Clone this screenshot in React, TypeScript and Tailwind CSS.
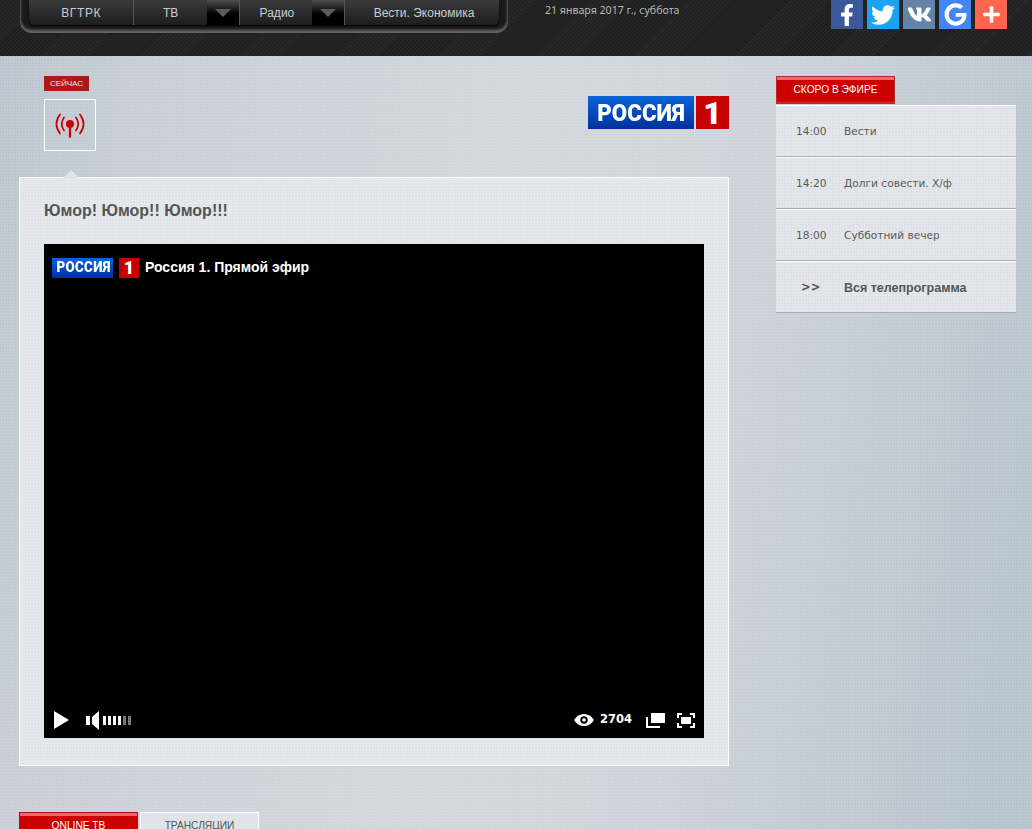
import { FaFacebookF, FaTwitter, FaVk, FaGoogle, FaPlus } from "react-icons/fa";

function Caret() {
  return (
    <div className="relative w-8 h-full flex items-center justify-center bg-black">
      <div className="absolute inset-x-0 top-0 h-[14px] bg-[radial-gradient(#555_0.7px,transparent_0.8px)] bg-[length:2px_2px] [mask-image:linear-gradient(#000,transparent)]" />
      <div className="relative mt-[1px] w-0 h-0 border-l-[8px] border-r-[8px] border-t-[8px] border-l-transparent border-r-transparent border-t-[#5c5c5c]" />
    </div>
  );
}

function NavItem({ label, width }: { label: string; width: string }) {
  return (
    <div className={`${width} h-full flex items-center justify-center border-l border-[#555] first:border-l-0 text-[12px] text-[#c8cdd2] bg-[linear-gradient(#3b3b3b,#1d1d1d)]`}>
      {label}
    </div>
  );
}

function Logo({ small }: { small?: boolean }) {
  return small ? (
    <div className="flex h-5 gap-[6px] font-['Roboto','Noto_Sans',sans-serif] font-black text-white">
      <div className="w-[61px] flex items-center justify-center text-[14px] tracking-[0.4px] bg-[linear-gradient(#0a64d8,#0030a0)]">
        <span className="inline-block pl-[2px] scale-x-[0.95]">РОССИЯ</span>
      </div>
      <div className="w-5 flex items-center justify-center text-[18px] bg-[#c40000]">1</div>
    </div>
  ) : (
    <div className="flex h-[33px] gap-[2px] font-['Roboto','Noto_Sans',sans-serif] font-black text-white">
      <div className="w-[106px] flex items-center justify-center text-[24px] bg-[linear-gradient(#0a64d8,#0030a0)]">
        <span className="inline-block scale-x-[0.93]">РОССИЯ</span>
      </div>
      <div className="w-[33px] flex items-center justify-center text-[32px] bg-[#c40000]">1</div>
    </div>
  );
}

const schedule = [
  ["14:00", "Вести"],
  ["14:20", "Долги совести. Х/ф"],
  ["18:00", "Субботний вечер"],
];

export default function App() {
  return (
    <div className="w-[1032px] h-[829px] overflow-hidden font-['Liberation_Sans',sans-serif] [background-image:radial-gradient(rgba(255,255,255,0.1)_1px,transparent_1.2px),linear-gradient(100deg,#b9c3cc,#c8ced6_15%,#d1d6dc_45%,#cfd4db_62%,#b7c2cb_95%)] [background-size:3px_3px,100%_100%]">
      <header className="h-14 flex items-start bg-[#232323] bg-[repeating-linear-gradient(135deg,#2a2a2a_0,#2a2a2a_1px,#1f1f1f_1px,#1f1f1f_2.8px)]">
        <div className="ml-5 w-[488px] h-[33px] px-[9px] rounded-b-xl bg-[#1a1a1a] shadow-[inset_0_-3px_3px_#666,inset_3px_0_3px_-2px_#444,inset_-3px_0_3px_-2px_#444]">
          <div className="h-[25px] flex rounded-b-md overflow-hidden shadow-[0_1px_2px_#000]">
            <NavItem label="ВГТРК" width="w-[105px] tracking-[0.6px]" />
            <NavItem label="ТВ" width="w-[74px]" />
            <Caret />
            <NavItem label="Радио" width="w-[74px] pl-[2px]" />
            <Caret />
            <NavItem label="Вести. Экономика" width="w-[156px] pl-1" />
          </div>
        </div>
        <div className="ml-[37px] mt-[4px] w-[286px] text-[10.600px] leading-[13px] text-[#b8b8b0] font-['Noto_Sans',sans-serif]">
          21 января 2017 г., суббота
        </div>
        <div className="flex gap-1 text-white">
          <div className="w-8 h-[29px] flex items-center justify-center bg-[#3b5998] text-[22px]"><FaFacebookF /></div>
          <div className="w-8 h-[29px] flex items-center justify-center bg-[#1da1f2] text-[24px]"><FaTwitter /></div>
          <div className="w-8 h-[29px] flex items-center justify-center bg-[#6383a8] text-[25px]"><FaVk /></div>
          <div className="w-8 h-[29px] flex items-center justify-center bg-[#4285f4] text-[23px]"><FaGoogle /></div>
          <div className="w-8 h-[29px] flex items-center justify-center bg-[#ff6550] text-[19px]"><FaPlus /></div>
        </div>
      </header>

      <main className="flex pl-[19px] pt-5 gap-[47px]">
        <div className="w-[710px]">
          <div className="h-[101px] flex justify-between pl-[25px]">
            <div>
              <div className="w-[45px] h-[15px] flex items-center justify-center bg-[#ac1a17] text-[#f4e4e4] text-[8px]">СЕЙЧАС</div>
              <div className="mt-2 w-[52px] h-[52px] border border-white flex items-center justify-center">
                <svg width="32" height="32" viewBox="0 0 32 32" fill="none" stroke="#cc0000" strokeWidth="1.700" strokeLinecap="round">
                  <circle cx="16" cy="15" r="4" fill="#cc0000" stroke="none" />
                  <path d="M16 16v12.600" strokeWidth="2.200" strokeLinecap="butt" />
                  <path d="M6 5.500c-4.500 6-4.500 13 0 19" />
                  <path d="M10 8.500c-2.800 4-2.800 9 0 13" />
                  <path d="M26 5.500c4.500 6 4.500 13 0 19" />
                  <path d="M22 8.500c2.800 4 2.800 9 0 13" />
                </svg>
              </div>
            </div>
            <div className="mt-5">
              <Logo />
            </div>
          </div>

          <section className="relative h-[589px] border border-white bg-[#e0e4e8] [background-image:radial-gradient(rgba(255,255,255,0.2)_1px,transparent_1.2px)] [background-size:3px_3px] px-6 pt-[23px]">
            <div className="absolute left-[43px] -top-[8px] w-0 h-0 border-l-[8px] border-r-[8px] border-b-[8px] border-l-transparent border-r-transparent border-b-[#e0e4e8]" />
            <h1 className="text-[16px] leading-5 font-bold text-[#555]">Юмор! Юмор!! Юмор!!!</h1>
            <div className="mt-[23px] w-[660px] h-[494px] bg-black flex flex-col justify-between">
              <div className="flex items-center gap-[6px] pl-2 pt-[13px]">
                <Logo small />
                <span className="text-[14px] font-bold text-white">Россия 1. Прямой эфир</span>
              </div>
              <div className="h-[36px] flex items-center justify-between pl-[10px] pr-[9px]">
                <div className="flex items-center">
                  <svg width="15" height="18" viewBox="0 0 15 18"><path d="M0 0l15 9L0 18z" fill="#fff" /></svg>
                  <svg className="ml-[17px]" width="13" height="19" viewBox="0 0 13 19"><path d="M0 5h4v9H0z" fill="#fff" /><path d="M6 6l7-6v19l-7-6z" fill="#fff" /></svg>
                  <div className="ml-[4px] flex gap-[2px]">
                    <div className="w-[3px] h-[9px] bg-white" />
                    <div className="w-[3px] h-[9px] bg-white" />
                    <div className="w-[3px] h-[9px] bg-white" />
                    <div className="w-[3px] h-[9px] bg-white" />
                    <div className="w-[3px] h-[9px] bg-[#777]" />
                    <div className="w-[3px] h-[9px] bg-[#777]" />
                  </div>
                </div>
                <div className="flex items-center">
                  <svg width="20" height="12" viewBox="0 0 20 12"><path d="M0 6c2.500-4 6-6 10-6s7.500 2 10 6c-2.500 4-6 6-10 6S2.500 10 0 6z" fill="#fff" /><circle cx="10" cy="6" r="3.700" fill="#000" /><circle cx="10" cy="6" r="1.800" fill="#fff" /></svg>
                  <span className="ml-[6px] font-['DejaVu_Sans',sans-serif] text-[11.500px] font-bold text-white w-[34px]">2704</span>
                  <svg className="ml-[12px]" width="19" height="15" viewBox="0 0 19 15"><path d="M5 0h14v10H5z" fill="#fff" /><path d="M1 4v10h13" stroke="#fff" strokeWidth="2" fill="none" /></svg>
                  <svg className="ml-[12px]" width="18" height="15" viewBox="0 0 18 15" fill="none" stroke="#fff" strokeWidth="2"><path d="M1 5V1h4M13 1h4v4M17 10v4h-4M5 14H1v-4" /><rect x="4" y="4" width="10" height="7" fill="#fff" stroke="none" /></svg>
                </div>
              </div>
            </div>
          </section>

          <div className="mt-[46px] flex gap-[2px] text-[10.200px]">
            <div className="w-[119px] h-7 flex items-center justify-center text-white border border-[#a81010] bg-[linear-gradient(#e86a6a_0,#e86a6a_3px,#cc0000_3px,#cc0000_100%)]">ONLINE ТВ</div>
            <div className="w-[119px] h-7 flex items-center justify-center text-[#555] border border-white bg-[#e0e4e8]">ТРАНСЛЯЦИИ</div>
          </div>
        </div>

        <aside className="w-[240px]">
          <div className="w-[119px] h-7 flex items-center justify-center text-[10.200px] text-white border border-[#b52a2a] bg-[linear-gradient(#e86a6a_0,#e86a6a_3px,#cc0000_3px,#cc0000_24px,#e04a4a_27px)]">СКОРО В ЭФИРЕ</div>
          <ul className="mt-px bg-[#dde1e6] [background-image:radial-gradient(rgba(255,255,255,0.2)_1px,transparent_1.2px)] [background-size:3px_3px]">
            {schedule.map(([t, name]) => (
              <li key={t} className="h-[52px] pt-[2px] flex items-center border-t border-white border-b border-b-[#a9adb1] text-[10.600px] text-[#5a5a5a] font-['DejaVu_Sans',sans-serif]">
                <span className="w-[68px] pl-5">{t}</span>
                <span>{name}</span>
              </li>
            ))}
            <li className="h-[52px] pt-[2px] flex items-center border-t border-white border-b border-b-[#a9adb1] text-[12.500px] font-bold text-[#555]">
              <span className="w-[68px] pl-[25px] font-['DejaVu_Sans',sans-serif] text-[11.500px]">&gt;&gt;</span>
              <span>Вся телепрограмма</span>
            </li>
          </ul>
        </aside>
      </main>
    </div>
  );
}
